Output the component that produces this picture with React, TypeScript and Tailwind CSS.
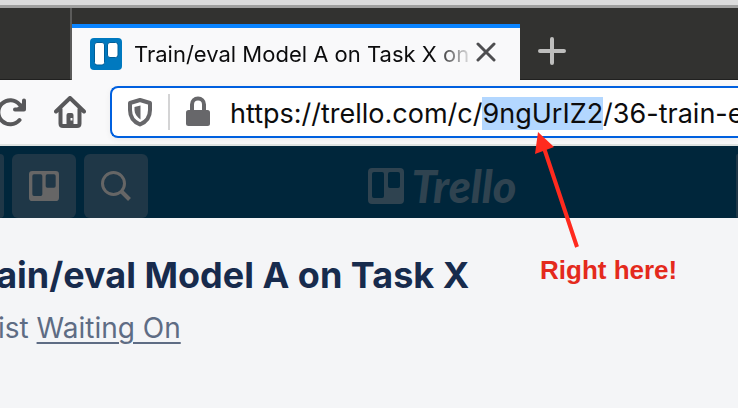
import { useEffect, useRef } from "react";

const address = "https://trello.com/c/9ngUrIZ2/36-train-eval";
const cardId = "9ngUrIZ2";

function BoardGlyph({ className }: { className: string }) {
  return (
    <svg className={className} viewBox="0 0 36 36" fill="currentColor" fillRule="evenodd" aria-hidden="true">
      <path d="M4 0h28a4 4 0 0 1 4 4v28a4 4 0 0 1-4 4H4a4 4 0 0 1-4-4V4a4 4 0 0 1 4-4zM6 4a2 2 0 0 0-2 2v22a2 2 0 0 0 2 2h8a2 2 0 0 0 2-2V6a2 2 0 0 0-2-2zM22 4a2 2 0 0 0-2 2v12a2 2 0 0 0 2 2h8a2 2 0 0 0 2-2V6a2 2 0 0 0-2-2z" />
    </svg>
  );
}

function TabStrip() {
  return (
    <div className="flex h-[72px] bg-[#323230]">
      <div className="w-[72px] shrink-0 border-r-2 border-b border-r-[#5b5b5a] border-b-[#20201f]" />
      <div className="flex grow border-b border-[#20201f] pt-4">
        <div className="-mb-px flex w-[448px] shrink-0 items-center border-t-4 border-[#0a84ff] bg-[#f9f9fa] pl-[18px]">
          <svg className="size-8 shrink-0" viewBox="0 0 32 32" aria-hidden="true">
            <rect width="32" height="32" rx="4" fill="#0079bf" />
            <rect x="4.500" y="4.500" width="10" height="22.500" rx="2.500" fill="#fff" stroke="#005f99" />
            <rect x="17.500" y="4.500" width="10.500" height="15" rx="2.500" fill="#fff" stroke="#005f99" />
          </svg>
          <div className="ml-3 w-[340px] overflow-hidden bg-linear-to-r from-[#0c0c0d] from-88% to-transparent to-100% bg-clip-text text-[22px] leading-8 whitespace-nowrap text-transparent">
            Train/eval Model A on Task X on
          </div>
          <button aria-label="Close tab" className="shrink-0 text-[#4e4e50]">
            <svg className="size-6" viewBox="0 0 24 24" stroke="currentColor" strokeWidth="3" strokeLinecap="round" aria-hidden="true">
              <path d="M4 2l16 16M20 2L4 18" />
            </svg>
          </button>
        </div>
        <button aria-label="New tab" className="ml-4 h-[54px] text-[#bebebd]">
          <svg className="size-8" viewBox="0 0 32 32" stroke="currentColor" strokeWidth="4" strokeLinecap="round" aria-hidden="true">
            <path d="M16 4v24M4 16h24" />
          </svg>
        </button>
      </div>
    </div>
  );
}

function Toolbar() {
  const field = useRef<HTMLInputElement>(null);
  useEffect(() => {
    const input = field.current;
    if (!input) return;
    const start = address.indexOf(cardId);
    const rewind = () => {
      input.scrollLeft = 0;
    };
    input.addEventListener("scroll", rewind);
    input.focus({ preventScroll: true });
    input.setSelectionRange(start, start + cardId.length);
    rewind();
    const frame = requestAnimationFrame(rewind);
    return () => {
      cancelAnimationFrame(frame);
      input.removeEventListener("scroll", rewind);
    };
  }, []);
  return (
    <div className="flex h-[66px] items-start border-b-2 border-[#dfe3e1] bg-[#f9f9fa] pt-[6px]">
      <button aria-label="Reload" className="-ml-1 flex h-[52px] items-center text-[#58585a]">
        <svg className="size-8" viewBox="0 0 32 32" fill="none" stroke="currentColor" strokeWidth="4" strokeLinecap="round" aria-hidden="true">
          <path d="M23.500 24A12 12 0 1 1 23.500 8.500" />
          <path d="M28 4.500v9h-9" strokeLinejoin="round" />
          <path d="M28 5v8h-8z" fill="currentColor" stroke="none" />
        </svg>
      </button>
      <button aria-label="Home" className="ml-[26px] flex h-[52px] items-center text-[#58585a]">
        <svg className="size-8" viewBox="0 0 32 32" fill="none" stroke="currentColor" strokeWidth="4" strokeLinecap="round" strokeLinejoin="round" aria-hidden="true">
          <path d="M2 15.500L16 2l14 13.500M6.500 13v14.500q0 2.500 2.500 2.500h14q2.500 0 2.500-2.500V13" />
          <path d="M12.500 28V19q0-2 2-2h3q2 0 2 2v9zm4-6v2.500h2V22z" fill="currentColor" fillRule="evenodd" stroke="none" />
        </svg>
      </button>
      <div className="ml-6 flex h-[52px] grow items-center rounded-l-lg border-2 border-r-0 border-[#0060df] bg-white pl-3 shadow-[0_2px_6px_rgba(0,0,0,0.06)]">
        <svg className="size-8 shrink-0 text-[#67676a]" viewBox="0 0 32 32" aria-hidden="true">
          <path d="M16 4L26 7v7c0 7-4 12-10 14.500C10 26 6 21 6 14V7z" fill="none" stroke="currentColor" strokeWidth="4" strokeLinejoin="round" />
          <path d="M16.500 9.500v14C13 21 10.500 18 10.500 14v-3z" fill="currentColor" />
        </svg>
        <div className="ml-3 h-9 w-[2px] shrink-0 bg-[#d4d4d5]" />
        <svg className="ml-3 size-8 shrink-0 text-[#67676a]" viewBox="0 0 32 32" aria-hidden="true">
          <path d="M10 14V8.500a6 6 0 0 1 12 0V14" fill="none" stroke="currentColor" strokeWidth="4" />
          <rect x="4" y="14" width="24" height="16" rx="2.500" fill="currentColor" />
        </svg>
        <input
          ref={field}
          aria-label="Address"
          defaultValue={address}
          spellCheck={false}
          className="ml-4 h-9 min-w-0 grow pt-0.5 text-[27px] leading-8 text-[#0c0c0d] outline-none selection:bg-[#b3d7ff] selection:text-[#0c0c0d]"
        />
      </div>
    </div>
  );
}

function BoardHeader() {
  return (
    <header className="flex h-[72px] items-start gap-2 overflow-hidden bg-[#00263b] pt-2">
      <div className="h-16 w-1 shrink-0 rounded-r-md bg-[#1f3747]" />
      <button aria-label="Boards" className="flex size-16 shrink-0 items-center justify-center rounded-md bg-[#1f3747] text-[#666666]">
        <BoardGlyph className="size-[30px]" />
      </button>
      <button aria-label="Search" className="flex size-16 shrink-0 items-center justify-center rounded-md bg-[#1f3747] text-[#666666]">
        <svg className="size-8" viewBox="0 0 32 32" fill="none" stroke="currentColor" strokeWidth="3" aria-hidden="true">
          <circle cx="13.500" cy="13.500" r="11" />
          <path d="M21.500 21.500l8 8" strokeWidth="4" />
        </svg>
      </button>
      <a href="#" aria-label="Trello" className="mx-auto flex h-16 items-center gap-2 text-[#2f4350]">
        <BoardGlyph className="size-9" />
        <span className="font-[Lato,sans-serif] text-[45px] leading-10 font-black italic">Trello</span>
      </a>
      <div className="h-16 w-[2px] shrink-0 rounded-l-md bg-[#1f3747]" />
    </header>
  );
}

export default function App() {
  return (
    <div className="relative flex min-h-screen flex-col overflow-hidden bg-[#f4f5f7] font-[Inter,sans-serif]">
      <div className="h-2 border-b-3 border-[#a0a09f] bg-[#dcdcdc]" />
      <TabStrip />
      <Toolbar />
      <BoardHeader />
      <main className="-ml-10 pt-8">
        <h1 className="text-[36px] leading-[50px] font-bold whitespace-nowrap text-[#172b4d]">Train/eval Model A on Task X</h1>
        <p className="mt-2 text-[28px] leading-10 whitespace-nowrap text-[#5e6c84]">
          in list{" "}
          <a href="#" className="underline decoration-2 underline-offset-4">
            Waiting On
          </a>
        </p>
      </main>
      <svg className="pointer-events-none absolute top-[132px] left-[532px] h-[116px] w-[50px]" viewBox="0 0 50 116" aria-hidden="true">
        <path d="M12 16L45 115" stroke="#ff2a1e" strokeWidth="4" />
        <path d="M6 0L22 15L3 22z" fill="#ff2a1e" />
      </svg>
      <p className="absolute top-[254px] left-[540px] font-['Liberation_Sans',sans-serif] text-[26px] leading-8 font-bold whitespace-nowrap text-[#e42a1d]">
        Right here!
      </p>
    </div>
  );
}
